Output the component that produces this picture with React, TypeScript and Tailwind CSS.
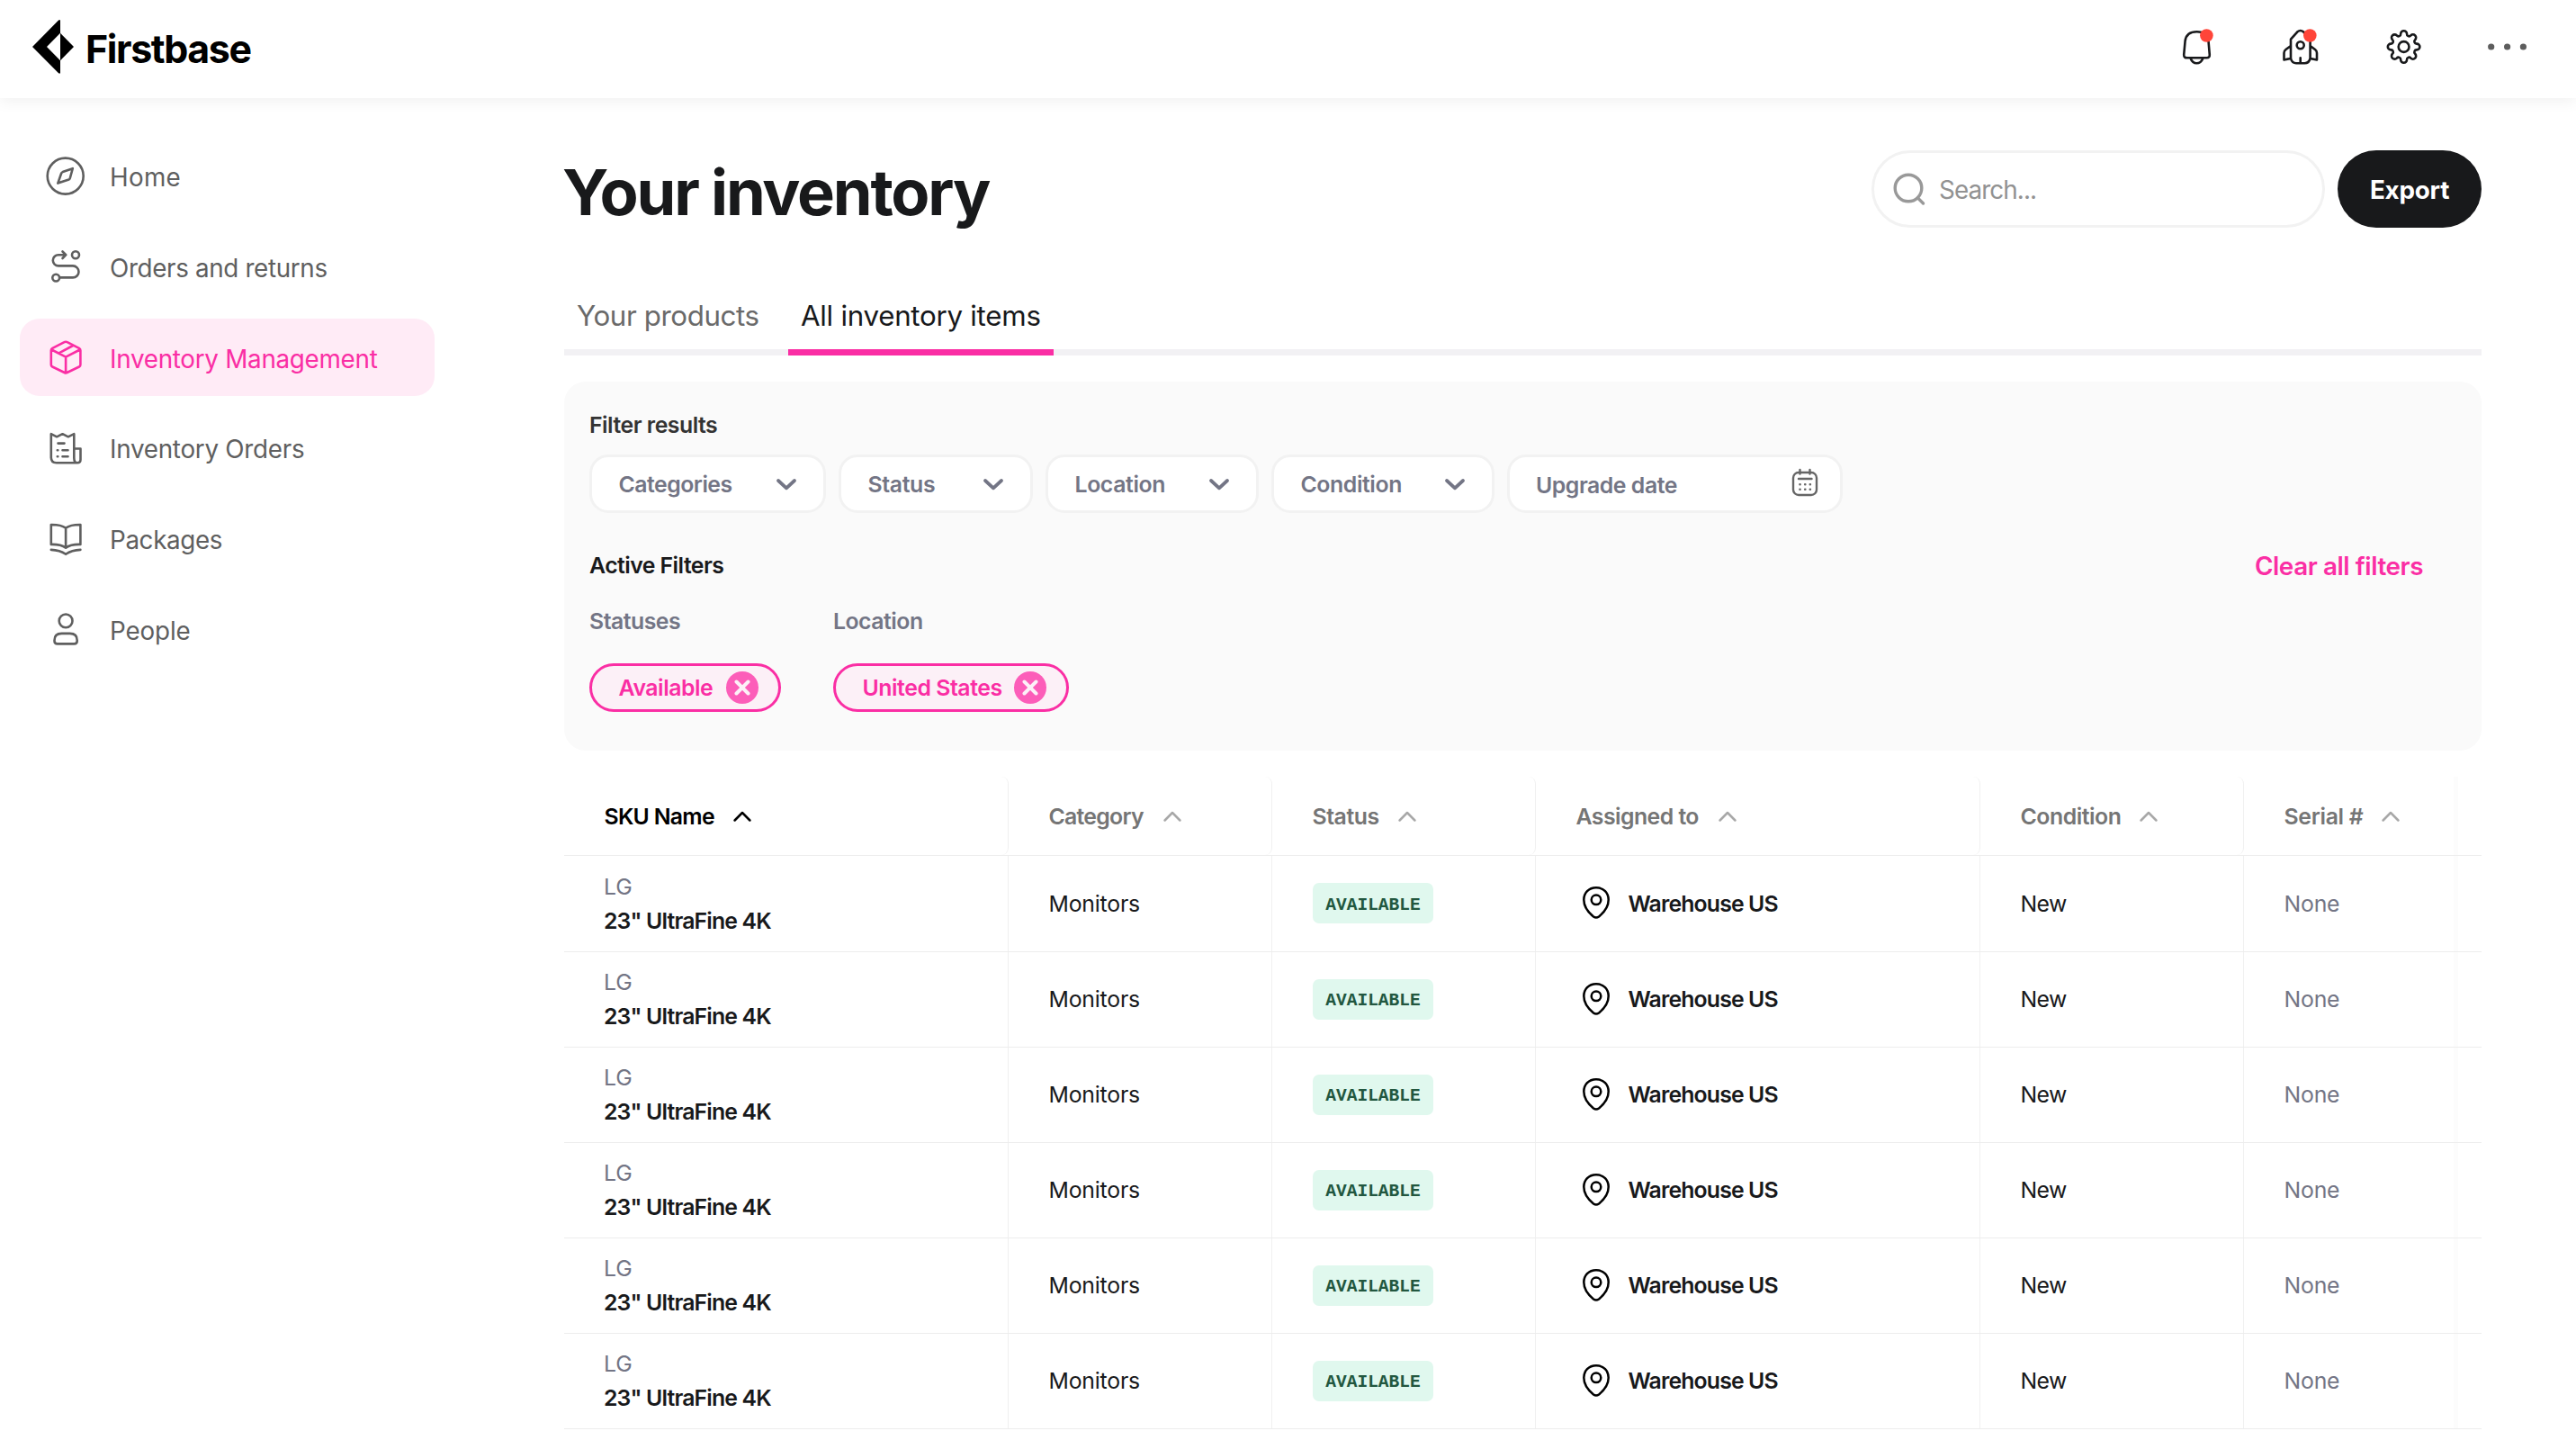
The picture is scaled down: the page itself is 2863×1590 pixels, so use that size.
import React from "react";

type IconProps = { box: string; className?: string; stroke?: number; children: React.ReactNode };

function Icon({ box, className = "", stroke = 2.6, children }: IconProps) {
  return (
    <svg
      viewBox={box}
      className={`shrink-0 ${className}`}
      fill="none"
      stroke="currentColor"
      strokeWidth={stroke}
      strokeLinecap="round"
      strokeLinejoin="round"
    >
      {children}
    </svg>
  );
}

/* Gear outline: eight round teeth joined by round valleys. */
function gearPath(cx: number, cy: number) {
  const reach = 14.4;
  const half = 3.4;
  const at = (deg: number, off: number) => {
    const a = (deg * Math.PI) / 180;
    const x = cx + reach * Math.cos(a) - off * Math.sin(a);
    const y = cy + reach * Math.sin(a) + off * Math.cos(a);
    return `${x.toFixed(2)} ${y.toFixed(2)}`;
  };
  let d = `M${at(0, -half)}`;
  for (let k = 0; k < 8; k++) {
    d += `A${half} ${half} 0 0 1 ${at(k * 45, half)}`;
    d += `A2.5 2.5 0 0 0 ${at((k + 1) * 45, -half)}`;
  }
  return d + "Z";
}

const nav = [
  {
    label: "Home",
    track: "tracking-[0.3px]",
    box: "50.5 173.6 44 44",
    icon: (
      <>
        <circle cx="72.2" cy="195.2" r="20" />
        <path d="M80.3 186.8 77.3 197.6Q77 198.7 76 199.1L63.8 203.2 67.6 192.4Q68 191.2 69.2 190.7Z" />
      </>
    ),
  },
  {
    label: "Orders and returns",
    track: "tracking-[-0.35px]",
    box: "50.5 274.3 44 44",
    icon: (
      <>
        <path d="M72 283.5H64.4A6.1 6.1 0 0 0 64.4 295.7H80.5A6.5 6.5 0 0 1 80.5 308.7H66M69 279.8 72.8 283.5 69 287.3" />
        <circle cx="83.5" cy="283.6" r="4" />
        <circle cx="61.7" cy="308.9" r="3.9" />
      </>
    ),
  },
  {
    label: "Inventory Management",
    track: "tracking-[-0.28px]",
    active: true,
    box: "50.5 375 44 44",
    icon: (
      <path d="M71 380.2Q72.6 379.2 74.2 380.2L87.3 386.8Q88.9 387.8 88.9 389.3V405.3Q88.9 406.7 87.5 407.5L74 414Q72.6 414.7 71.2 414L57.7 407.5Q56.3 406.7 56.3 405.3V389.3Q56.3 387.8 57.9 386.8ZM56.8 388.5 72.6 396.7 88.4 388.5M72.6 396.7V414.4M65 392.3 80.6 384" />
    ),
  },
  {
    label: "Inventory Orders",
    track: "tracking-[-0.27px]",
    box: "50.5 475.7 44 44",
    icon: (
      <path d="M56.3 481.9 62.6 485 69 481.9 75.3 485 81.8 481.9V508.5Q81.8 514 85.5 514Q89 514 89 510.5V498.2H82M56.3 481.9V508Q56.3 514 62.3 514H85.5M64 492.3H71M63.3 500H63.8M69 500H75M63.3 507H63.8M69 507H75" />
    ),
  },
  {
    label: "Packages",
    track: "tracking-[-0.37px]",
    box: "50.5 576.4 44 44",
    icon: (
      <path d="M56.3 582.4Q67 582.2 72.6 586Q78.2 582.2 88.9 582.4V604.3Q78.2 604 72.6 608Q67 604 56.3 604.3ZM72.6 586V608M56.3 610.3Q66 610.6 72.6 615.2Q79.2 610.6 88.9 610.3" />
    ),
  },
  {
    label: "People",
    track: "tracking-[-0.14px]",
    box: "50.5 677.1 44 44",
    icon: (
      <>
        <circle cx="72.6" cy="690" r="7.4" />
        <path d="M68 704H77.2Q85.2 704 85.2 711.5V712.4Q85.2 715.5 82 715.5H63.2Q60 715.5 60 712.4V711.5Q60 704 68 704Z" />
      </>
    ),
  },
];

const filters = [
  { label: "Categories", cls: "w-[263px] tracking-[-0.5px]" },
  { label: "Status", cls: "w-[216px] tracking-[-0.35px]" },
  { label: "Location", cls: "w-[237px] tracking-[-0.38px]" },
  { label: "Condition", cls: "w-[248px] tracking-[-0.4px]" },
];

const chips = [
  { group: "Statuses", label: "Available", cls: "mr-[58px] w-[213px]", pill: "w-[213px]" },
  { group: "Location", label: "United States", cls: "w-[262px]", pill: "w-[262px]" },
];

const columns = [
  { label: "SKU Name", cls: "tracking-[-0.72px] text-black", gap: "gap-[21px]" },
  { label: "Category", cls: "tracking-[-0.72px] text-[#757575]", gap: "gap-[22px]" },
  { label: "Status", cls: "tracking-[-0.45px] text-[#757575]", gap: "gap-[21px]" },
  { label: "Assigned to", cls: "tracking-[-0.53px] text-[#757575]", gap: "gap-[22px]" },
  { label: "Condition", cls: "tracking-[-0.45px] text-[#757575]", gap: "gap-[21px]" },
  { label: "Serial #", cls: "tracking-[-0.3px] text-[#757575]", gap: "gap-[21px]" },
];

const rows = [1, 2, 3, 4, 5, 6];
const grid = "grid grid-cols-[494px_293px_293px_494px_293px_233px_5px_26px]";
const cell = "flex items-center border-r border-[#f0f0f0] pb-[1px]";

function Header() {
  return (
    <header className="relative z-10 flex h-[109px] shrink-0 items-center justify-between bg-white pr-[46px] pl-[36px] shadow-[0_4px_16px_rgba(0,0,0,0.06)]">
      <div className="flex items-center gap-[13px]">
        <svg viewBox="36 22 46 60" className="mb-[5px] h-[60px] w-[46px]" fill="#000">
          <path d="M36 52 65.3 22.3H67V36.7L52 52 67 67.3V81.6H65.3Z" />
          <path d="M67 36.7 82 52 67 67.3Z" />
        </svg>
        <span className="mb-[1px] text-[42.9px] leading-[50px] font-bold tracking-[-1.37px] text-black">Firstbase</span>
      </div>
      <div className="flex items-center gap-[55px] text-[#18191b]">
        <Icon box="31.6 24.5 60 60" className="h-[60px] w-[60px]">
          <path d="M50.3 63.8H72.2Q75.6 63.8 75.4 60.4L74.1 45Q72.6 34.8 61.2 34.8Q49.6 34.8 48.2 45L46.8 60.4Q46.7 63.8 50.3 63.8ZM54.3 64.5Q56.3 69.8 61 69.8Q65.7 69.8 67.9 64.5" />
          <circle cx="72" cy="39" r="7.3" fill="#ff4539" stroke="none" />
        </Icon>
        <Icon box="147 24.5 60 60" className="h-[60px] w-[60px]">
          <path d="M166 43.2 173.4 34.8Q176.7 32.2 180 34.8L187.6 43.2V64.5Q186 69.8 181.5 69.8H172Q167.5 69.8 166 64.5ZM166 50.5 160.5 54.5Q158.5 56 158.5 58.2V66L166 64.4M187.6 50.5 193 54.5Q195 56 195 58.2V66L187.6 64.4M176.7 63.8V69.5" />
          <circle cx="176.7" cy="49.8" r="4" />
          <circle cx="187.3" cy="39" r="7.3" fill="#ff4539" stroke="none" />
        </Icon>
        <Icon box="261.7 24.5 60 60" className="h-[60px] w-[60px]">
          <path d={gearPath(291.3, 51.5)} />
          <circle cx="291.3" cy="51.5" r="5.9" />
        </Icon>
        <Icon box="376.8 24.5 60 60" className="h-[60px] w-[60px] text-[#5d5d5d]">
          <g fill="currentColor" stroke="none">
            <circle cx="388.5" cy="51.5" r="3.6" />
            <circle cx="406.4" cy="51.5" r="3.6" />
            <circle cx="424.2" cy="51.5" r="3.6" />
          </g>
        </Icon>
      </div>
    </header>
  );
}

function Sidebar() {
  return (
    <nav className="flex w-[627px] shrink-0 flex-col gap-[14.7px] pt-[43.8px] pl-[22px]">
      {nav.map((n) => (
        <div
          key={n.label}
          className={`flex h-[86px] w-[461px] items-center gap-[27.5px] rounded-[22px] pl-[28.5px] ${
            n.active ? "bg-[#ffebf6] text-[#fa2ea4]" : "text-[#5f5f5f]"
          }`}
        >
          <Icon box={n.box} className="h-[44px] w-[44px]">{n.icon}</Icon>
          <span className={`pt-[3px] text-[27.8px] leading-[36px] ${n.track}`}>{n.label}</span>
        </div>
      ))}
    </nav>
  );
}

function FilterPanel() {
  return (
    <section className="mt-[29px] h-[410px] rounded-[24px] bg-[#fafafa] pt-[33px] pl-[28px] text-[24.8px] leading-[30px] font-semibold text-[#737585]">
      <div className="tracking-[-0.48px] text-[#333333]">Filter results</div>
      <div className="mt-[18px] flex gap-[14px]">
        {filters.map((f) => (
          <div
            key={f.label}
            className={`flex h-[65px] items-center justify-between rounded-[21px] border-[3px] border-[#f2f2f2] bg-white pr-[29px] pl-[29.5px] ${f.cls}`}
          >
            {f.label}
            <Icon box="0 0 24 16" stroke={3.8} className="h-[16px] w-[24px]">
              <path d="M3 4 12 12.3 21 4" />
            </Icon>
          </div>
        ))}
        <div className="flex h-[65px] w-[373px] items-center justify-between rounded-[21px] border-[3px] border-[#f2f2f2] bg-white pr-[24px] pl-[29px] tracking-[-0.45px]">
          <span className="pt-[3px]">Upgrade date</span>
          <Icon box="0 0 30 32" stroke={2.4} className="mb-[3px] h-[32px] w-[30px] text-[#666666]">
            <rect x="2" y="5" width="26" height="25" rx="6" />
            <path d="M9.5 2V6.5M20.5 2V6.5M8 12H22.5" />
            <path strokeWidth="2.6" d="M9.5 18.2H9.6M15.2 18.2H15.3M20.8 18.2H20.9M9.5 23.8H9.6M15.2 23.8H15.3M20.8 23.8H20.9" />
          </Icon>
        </div>
      </div>
      <div className="mt-[43px] flex items-center justify-between pr-[65px]">
        <span className="tracking-[-0.54px] text-[#18191b]">Active Filters</span>
        <span className="-mb-[2px] text-[27.8px] tracking-[-0.42px] text-[#fa2ea4]">Clear all filters</span>
      </div>
      <div className="mt-[32px] flex">
        {chips.map((c) => (
          <div key={c.group} className={c.cls}>
            <div className="tracking-[-0.5px]">{c.group}</div>
            <div
              className={`mt-[32px] flex h-[54px] items-center justify-between rounded-full border-[3px] border-[#fa2ea4] bg-[#fcf0f7] pr-[22px] pl-[29.5px] tracking-[-0.44px] text-[#fa2ea4] ${c.pill}`}
            >
              <span className="pb-[1px]">{c.label}</span>
              <span className="flex h-[36px] w-[36px] items-center justify-center rounded-full bg-[#fc5db9] text-[#fcf0f7]">
                <Icon box="0 0 20 20" stroke={4} className="h-[20px] w-[20px]">
                  <path d="M3.5 3.5 16.5 16.5M16.5 3.5 3.5 16.5" />
                </Icon>
              </span>
            </div>
          </div>
        ))}
      </div>
    </section>
  );
}

function InventoryTable() {
  return (
    <section className="mt-[29px] text-[24.8px] leading-[38px] text-[#18191b]">
      <div className={`${grid} h-[88px] border-b border-[#ededed] font-semibold`}>
        {columns.map((c, i) => (
          <div
            key={c.label}
            className={`flex items-center rounded-r-[8px] pl-[44.5px] ${c.gap} ${c.cls} ${i < 5 ? "border-r border-[#f0f0f0]" : ""}`}
          >
            {c.label}
            <Icon box="0 0 20 12" stroke={2.5} className={`h-[12px] w-[20px] ${i === 0 ? "text-black" : "text-[#a8a8a8]"}`}>
              <path d="M1.6 10.5 10 2 18.4 10.5" />
            </Icon>
          </div>
        ))}
        <div className="bg-[#fcfcfc]" />
        <div />
      </div>
      {rows.map((r) => (
        <div key={r} className={`${grid} border-b border-[#ededed] ${r === 1 ? "h-[107px]" : "h-[106px]"}`}>
          <div className={`${cell} pl-[44px]`}>
            <div>
              <div className="text-[#737585]">LG</div>
              <div className="font-semibold tracking-[-0.84px]">23" UltraFine 4K</div>
            </div>
          </div>
          <div className={`${cell} pl-[44.5px] tracking-[-0.2px]`}>Monitors</div>
          <div className={`${cell} pl-[45px]`}>
            <span className="flex h-[45px] w-[134px] items-center justify-center rounded-[7px] bg-[#e0f8ee] pt-[4px] font-['Liberation_Mono',monospace] text-[19.5px] font-bold text-[#22573f]">
              AVAILABLE
            </span>
          </div>
          <div className={`${cell} gap-[14px] pl-[44.5px] font-semibold tracking-[-0.85px]`}>
            <Icon box="0 0 44 44" stroke={2.5} className="mb-[1px] h-[44px] w-[44px] text-black">
              <path d="M22 5.2C13.6 5.2 8.3 11.4 8.3 18.8C8.3 27 15 34.2 19 37.4Q22 39.6 25 37.4C29 34.2 35.7 27 35.7 18.8C35.7 11.4 30.4 5.2 22 5.2Z" />
              <circle cx="22" cy="18.8" r="5.3" />
            </Icon>
            Warehouse US
          </div>
          <div className={`${cell} pl-[44.5px] tracking-[-0.6px]`}>New</div>
          <div className="flex items-center pb-[1px] pl-[44.5px] tracking-[-0.2px] text-[#737585]">None</div>
          <div className="bg-[#fcfcfc]" />
          <div />
        </div>
      ))}
    </section>
  );
}

export default function App() {
  return (
    <div className="flex h-[1590px] w-[2863px] flex-col overflow-hidden bg-white font-['Inter',sans-serif]">
      <Header />
      <div className="flex min-h-0 flex-1">
        <Sidebar />
        <main className="w-[2131px] pt-[58px]">
          <div className="flex h-[86px] items-center">
            <h1 className="-ml-[2px] flex-1 pt-[7px] text-[70.4px] leading-[80px] font-bold tracking-[-2.2px] text-[#18191b]">
              Your inventory
            </h1>
            <div className="flex h-[86px] w-[504px] items-center gap-[14px] rounded-full border-[3px] border-[#f2f2f2] pl-[20px] text-[#929292]">
              <Icon box="0 0 38 38" stroke={3.4} className="h-[38px] w-[38px] text-[#999999]">
                <circle cx="18" cy="18" r="14.8" />
                <path d="M28.5 29 34.5 35" />
              </Icon>
              <span className="pt-[3px] text-[27.8px] tracking-[-0.9px]">Search...</span>
            </div>
            <div className="ml-[14px] flex h-[86px] w-[160px] items-center justify-center rounded-full bg-[#18191b] pt-[3px] text-[27.8px] font-bold tracking-[-0.23px] text-white">
              Export
            </div>
          </div>
          <div className="mt-[60px] flex h-[82px] text-[31.3px]">
            <div className="flex w-[249px] items-center border-b-[7px] border-[#f2f1f4] pt-[2px] pl-[14px] tracking-[-0.4px] text-[#6a6a6a]">
              Your products
            </div>
            <div className="flex w-[295px] items-center border-b-[7px] border-[#fa2ea4] pt-[2px] pl-[14px] tracking-[-0.28px] text-[#18191b]">
              All inventory items
            </div>
            <div className="flex-1 border-b-[7px] border-[#f2f1f4]" />
          </div>
          <FilterPanel />
          <InventoryTable />
        </main>
      </div>
    </div>
  );
}
